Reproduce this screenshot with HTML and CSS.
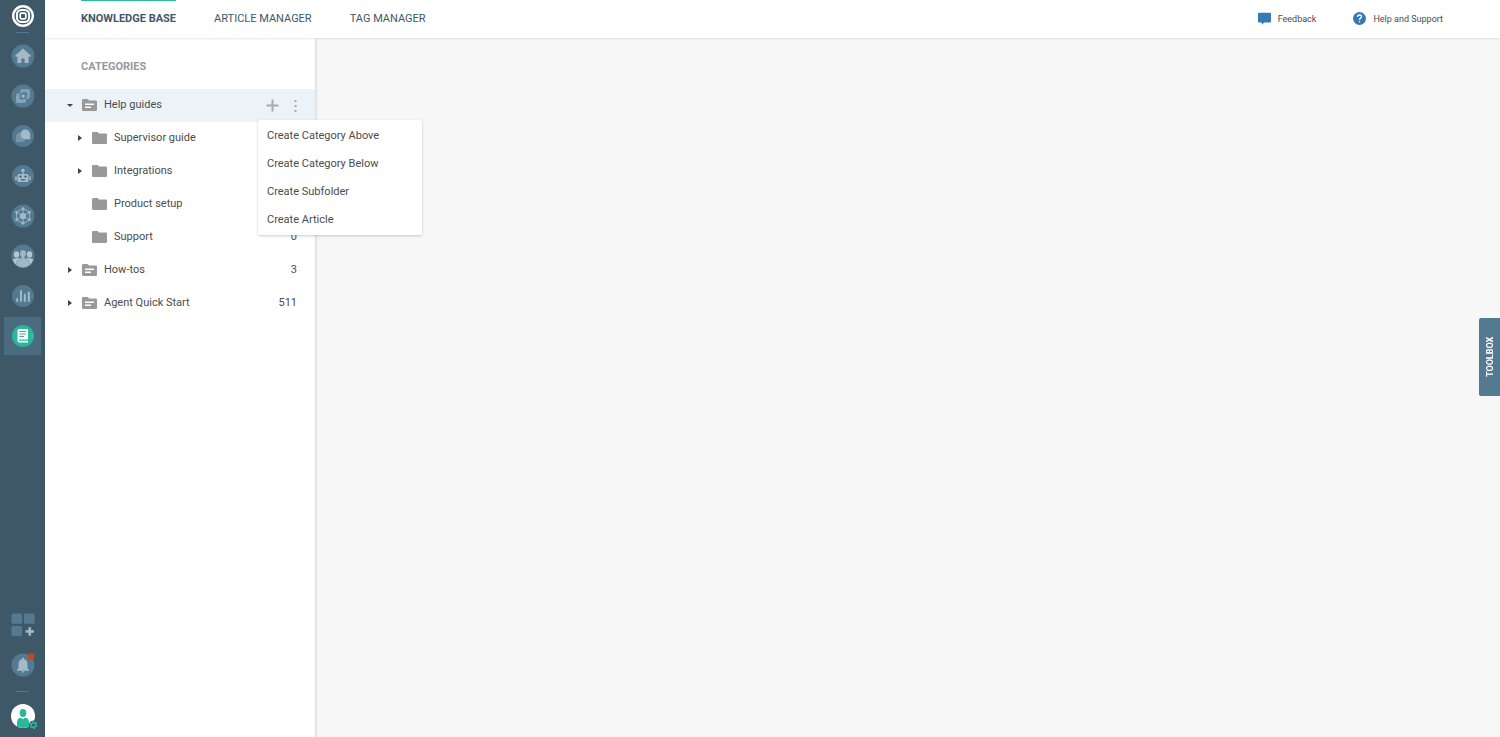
FILE: index.html
```html
<!DOCTYPE html>
<html lang="en">
<head>
    <meta charset="UTF-8">
    <meta name="viewport" content="width=device-width, initial-scale=1.0">
    <title>Knowledge Base</title>
    <link rel="stylesheet" href="styles.css">
</head>
<body>
    <!-- folder icons used in the category tree -->
    <svg class="symbols" aria-hidden="true">
        <symbol id="folder" viewBox="0 0 15 12">
            <path fill="#999" d="M1.2 0H5.6L7 1.4H13.8Q15 1.4 15 2.6V10.8Q15 12 13.8 12H1.2Q0 12 0 10.8V1.2Q0 0 1.2 0Z"/>
        </symbol>
        <symbol id="folder-text" viewBox="0 0 15 12">
            <path fill="#999" d="M1.2 0H5.6L7 1.4H13.8Q15 1.4 15 2.6V10.8Q15 12 13.8 12H1.2Q0 12 0 10.8V1.2Q0 0 1.2 0Z"/>
            <path fill="#fff" d="M3 4.5H12V6H3ZM3 7.5H9V9H3Z"/>
        </symbol>
    </svg>

    <aside class="sidebar">
        <a class="logo" href="#" aria-label="Home page">
            <svg width="22" height="22" viewBox="0 0 22 22" fill="none">
                <circle cx="11" cy="11" r="9.8" stroke="#fff" stroke-width="2.4"/>
                <rect x="4.9" y="4.9" width="12.2" height="12.2" rx="4.6" stroke="#fff" stroke-width="2"/>
                <rect x="8.2" y="8.2" width="5.6" height="5.6" rx="1.2" stroke="#fff" stroke-width="1.8"/>
            </svg>
        </a>
        <hr>
        <nav class="side-nav">
            <a href="#" aria-label="Dashboard">
                <svg width="24" height="24" viewBox="0 0 24 24">
                    <circle cx="12" cy="12" r="11.5" fill="#547a92"/>
                    <path fill="#a3bac8" d="M12 4.5L20 11.8L19 12.8H17.6V19H13.6V14.4H10.4V19H6.4V12.8H5L4 11.8Z"/>
                </svg>
            </a>
            <a href="#" aria-label="Tickets">
                <svg width="24" height="24" viewBox="0 0 24 24">
                    <circle cx="12" cy="12" r="11.5" fill="#547a92"/>
                    <path fill="#7f9fb3" d="M11 5H17.5Q19 5 19 6.5V12.5Q19 15 16.5 15H15.2V12H15.8V8.2H12V9H9V7Q9 5 11 5Z"/>
                    <path fill="#86a4b7" d="M8 9.2H8.8V15.6H12.4V15H15V17Q15 19 13 19H6.5Q5 19 5 17.5V12Q5 9.2 8 9.2Z"/>
                    <rect x="10.6" y="10.6" width="3" height="3" fill="#a3bac8"/>
                </svg>
            </a>
            <a href="#" aria-label="Chats">
                <svg width="24" height="24" viewBox="0 0 24 24">
                    <circle cx="12" cy="12" r="11" fill="#547a92"/>
                    <path fill="#7594a8" d="M9.4 8Q5 9 5 13.2V18H10Q13.2 18 14.6 15.8Q8.6 14.8 9.4 8Z"/>
                    <path fill="#a3bac8" d="M14.3 5.6A4.9 4.9 0 0 1 19.2 10.5V15.3H14.3A4.85 4.85 0 0 1 14.3 5.6Z"/>
                </svg>
            </a>
            <a href="#" aria-label="Bots">
                <svg width="24" height="24" viewBox="0 0 24 24">
                    <circle cx="12" cy="12" r="11" fill="#547a92"/>
                    <circle cx="12" cy="6.5" r="1.8" fill="#a3bac8"/>
                    <path fill="#a3bac8" d="M11.4 7H12.6V10H16Q17.5 10 17.5 11.5V16.5Q17.5 18 16 18H8Q6.5 18 6.5 16.5V11.5Q6.5 10 8 10H11.4ZM4.2 12.5H5.8V16H4.2ZM18.2 12.5H19.8V16H18.2Z"/>
                    <circle cx="9.5" cy="12.6" r="1.1" fill="#3e5868"/>
                    <circle cx="14.5" cy="12.6" r="1.1" fill="#3e5868"/>
                    <path d="M9.5 15.2H14.5L13.5 16.4H10.5Z" fill="#3e5868"/>
                </svg>
            </a>
            <a href="#" aria-label="Network">
                <svg width="24" height="24" viewBox="0 0 24 24">
                    <circle cx="12" cy="12" r="11.5" fill="#547a92"/>
                    <path fill="none" stroke="#a3bac8" stroke-width=".9" d="M12 4.5L18.5 8.2V15.8L12 19.5L5.5 15.8V8.2ZM12 4.5V19.5M5.5 8.2L18.5 15.8M18.5 8.2L5.5 15.8"/>
                    <g fill="#a3bac8">
                        <circle cx="12" cy="12" r="3.1"/>
                        <circle cx="12" cy="4.7" r="1.4"/>
                        <circle cx="18.4" cy="8.3" r="1.4"/>
                        <circle cx="18.4" cy="15.7" r="1.4"/>
                        <circle cx="12" cy="19.3" r="1.4"/>
                        <circle cx="5.6" cy="15.7" r="1.4"/>
                        <circle cx="5.6" cy="8.3" r="1.4"/>
                    </g>
                </svg>
            </a>
            <a href="#" aria-label="Contacts">
                <svg width="24" height="24" viewBox="0 0 24 24">
                    <circle cx="12" cy="12" r="11.5" fill="#547a92"/>
                    <path fill="#b3c6d1" d="M1.6 15.5Q4.5 13.8 7.5 14.3H16.5Q19.5 13.8 22.4 15.5Q19.6 23.4 12 23.5Q4.4 23.4 1.6 15.5Z"/>
                    <ellipse cx="5.5" cy="10.5" rx="2.6" ry="3.2" fill="#b3c6d1"/>
                    <ellipse cx="18.5" cy="10.5" rx="2.6" ry="3.2" fill="#b3c6d1"/>
                    <path fill="#a0b8c5" stroke="#7192a6" stroke-width=".6" d="M5 20.8Q5.6 15.2 10.5 14.4V13Q8.9 11.8 8.9 9.4Q9 6 12 6Q15 6 15.1 9.4Q15.1 11.8 13.5 13V14.4Q18.4 15.2 19 20.8Q12 26 5 20.8Z"/>
                </svg>
            </a>
            <a href="#" aria-label="Reports">
                <svg width="24" height="24" viewBox="0 0 24 24">
                    <circle cx="12" cy="12" r="11" fill="#547a92"/>
                    <path stroke="#a3bac8" stroke-width="2" stroke-linecap="round" d="M6.2 15V17M10 7V17M13.8 10.5V17M17.8 8.5V17"/>
                </svg>
            </a>
            <a class="active" href="#" aria-label="Knowledge base" aria-current="page">
                <svg width="24" height="24" viewBox="0 0 24 24">
                    <circle cx="12" cy="12" r="11" fill="#29b899"/>
                    <path fill="#fff" d="M8 5H17V15.6H8.6Q7.8 15.6 7.8 16.2Q7.8 16.8 8.6 16.8H17V18.6H8.4Q6.5 18.6 6.5 16.8V6.6Q6.5 5 8 5Z"/>
                    <path stroke="#29b899" d="M8.5 7.5H15M8.5 10H15M8.5 12.5H13"/>
                </svg>
            </a>
        </nav>
        <div class="side-bottom">
            <a href="#" aria-label="Add app">
                <svg width="24" height="24" viewBox="0 0 24 24">
                    <g fill="#547a92">
                        <rect x=".5" y=".5" width="10.6" height="10.2" rx="1.5"/>
                        <rect x="13" y=".5" width="10.6" height="10.2" rx="1.5"/>
                        <rect x=".5" y="13" width="10.6" height="10.2" rx="1.5"/>
                    </g>
                    <path stroke="#a3bac8" stroke-width="2.6" d="M18.8 14.3V22.7M14.6 18.5H23"/>
                </svg>
            </a>
            <a href="#" aria-label="Notifications">
                <svg width="24" height="24" viewBox="0 0 24 24">
                    <circle cx="12" cy="12" r="11.5" fill="#547a92"/>
                    <path fill="#a3bac8" d="M12 4.5Q12.9 4.5 13 5.9Q16.5 6.8 16.5 11V15L18 17V17.8H6V17L7.5 15V11Q7.5 6.8 11 5.9Q11.1 4.5 12 4.5ZM10.5 18.2H13.5Q13.3 19.6 12 19.6Q10.7 19.6 10.5 18.2Z"/>
                    <circle cx="20.2" cy="3.5" r="3.2" fill="#c9461c"/>
                </svg>
            </a>
            <hr>
            <a class="profile" href="#" aria-label="Profile">
                <svg width="28" height="26" viewBox="0 0 28 26">
                    <circle cx="12" cy="12" r="12" fill="#fff"/>
                    <ellipse cx="12" cy="9" rx="3.3" ry="4" fill="#29b899"/>
                    <path fill="#29b899" d="M6 22.6V18.5Q6 13.7 10 13.7L12 15.2L14 13.7Q18 13.7 18 18.5V22.6Q12 25.2 6 22.6Z"/>
                    <circle cx="22.5" cy="21" r="4.6" fill="#3e5868"/>
                    <circle cx="22.5" cy="21" r="2.3" fill="none" stroke="#29b899" stroke-width="1.6"/>
                    <circle cx="22.5" cy="21" r="3.5" fill="none" stroke="#29b899" stroke-width="1.2" stroke-dasharray="1.83"/>
                </svg>
            </a>
        </div>
    </aside>

    <div class="main">
        <header>
            <nav class="tabs">
                <a class="active" href="#">KNOWLEDGE BASE</a>
                <a href="#">ARTICLE MANAGER</a>
                <a href="#">TAG MANAGER</a>
            </nav>
            <div class="links">
                <a href="#">
                    <svg width="13" height="13" viewBox="0 0 13 13"><path fill="#337ab7" d="M1 .8H12Q13 .8 13 1.8V9.4Q13 10.4 12 10.4H6.2L3.8 12.8V10.4H1Q0 10.4 0 9.4V1.8Q0 .8 1 .8Z"/></svg>
                    Feedback
                </a>
                <a href="#">
                    <svg width="13" height="13" viewBox="0 0 13 13" fill="none">
                        <circle cx="6.5" cy="6.5" r="6.5" fill="#337ab7"/>
                        <path stroke="#fff" stroke-width="1.3" d="M4.5 5Q4.5 3 6.5 3Q8.5 3 8.5 4.8Q8.5 5.7 7.3 6.4Q6.5 6.9 6.5 8M6.5 9V10.3"/>
                    </svg>
                    Help and Support
                </a>
            </div>
        </header>

        <div class="content">
            <section class="categories">
                <h2>CATEGORIES</h2>
                <ul class="tree">
                    <li>
                        <div class="row selected">
                            <button class="arrow open" aria-label="Collapse"></button>
                            <svg class="folder"><use href="#folder-text"/></svg>
                            <span class="name">Help guides</span>
                            <button class="action" aria-label="Add">
                                <svg width="13" height="13" viewBox="0 0 13 13"><path stroke="#aaa" stroke-width="2" d="M6.5 .5V12.5M.5 6.5H12.5"/></svg>
                            </button>
                            <button class="action more" aria-label="More">
                                <svg width="3" height="13" viewBox="0 0 3 13"><path fill="#aaa" d="M.5 1H2.5V3H.5ZM.5 6H2.5V8H.5ZM.5 11H2.5V13H.5Z"/></svg>
                            </button>
                            <div class="menu">
                                <button>Create Category Above</button>
                                <button>Create Category Below</button>
                                <button>Create Subfolder</button>
                                <button>Create Article</button>
                            </div>
                        </div>
                        <ul>
                            <li class="row">
                                <button class="arrow" aria-label="Expand"></button>
                                <svg class="folder"><use href="#folder"/></svg>
                                <span class="name">Supervisor guide</span>
                            </li>
                            <li class="row">
                                <button class="arrow" aria-label="Expand"></button>
                                <svg class="folder"><use href="#folder"/></svg>
                                <span class="name">Integrations</span>
                            </li>
                            <li class="row">
                                <span class="arrow none"></span>
                                <svg class="folder"><use href="#folder"/></svg>
                                <span class="name">Product setup</span>
                            </li>
                            <li class="row">
                                <span class="arrow none"></span>
                                <svg class="folder"><use href="#folder"/></svg>
                                <span class="name">Support</span>
                                <span class="count">0</span>
                            </li>
                        </ul>
                    </li>
                    <li class="row">
                        <button class="arrow" aria-label="Expand"></button>
                        <svg class="folder"><use href="#folder-text"/></svg>
                        <span class="name">How-tos</span>
                        <span class="count">3</span>
                    </li>
                    <li class="row">
                        <button class="arrow" aria-label="Expand"></button>
                        <svg class="folder"><use href="#folder-text"/></svg>
                        <span class="name">Agent Quick Start</span>
                        <span class="count">511</span>
                    </li>
                </ul>
            </section>
            <main></main>
        </div>
    </div>

    <button class="toolbox">TOOLBOX</button>
</body>
</html>
```
FILE: styles.css
```css
* {
    box-sizing: border-box;
}
body {
    display: flex;
    min-height: 100vh;
    margin: 0;
    font-family: Roboto, sans-serif;
    font-size: 11px;
    color: #4c4c4c;
    background: #f7f7f7;
}
a {
    color: inherit;
    text-decoration: none;
}
button {
    padding: 0;
    border: 0;
    background: none;
    font: inherit;
    color: inherit;
    cursor: pointer;
}
svg {
    display: block;
    flex: none;
}
ul {
    margin: 0;
    padding: 0;
    list-style: none;
}
.symbols {
    display: none;
}

/* left icon bar */
.sidebar {
    display: flex;
    flex-direction: column;
    align-items: center;
    flex: none;
    width: 45px;
    padding: 5px 0 1px;
    background: #3e5868;
}
.sidebar hr {
    width: 13px;
    height: 1px;
    margin: 5px 0 4px;
    border: 0;
    background: #547a92;
}
.side-nav,
.side-bottom {
    display: flex;
    flex-direction: column;
    align-items: center;
    gap: 2px;
}
.side-nav a,
.side-bottom a {
    display: flex;
    align-items: center;
    justify-content: center;
    width: 37px;
    height: 38px;
}
.side-nav a.active {
    background: #4a6b80;
}
.side-bottom {
    margin-top: auto;
}
.side-bottom a.profile {
    justify-content: flex-end;
    width: 32px;
}

/* top bar */
.main {
    display: flex;
    flex-direction: column;
    flex: 1;
    min-width: 0;
}
header {
    position: relative;
    display: flex;
    justify-content: space-between;
    height: 38px;
    padding: 0 57px 0 36px;
    background: #fff;
    box-shadow: 0 1px 2px rgba(0, 0, 0, 0.1);
}
.tabs {
    display: flex;
    gap: 38px;
}
.tabs a {
    border-top: 1px solid transparent;
    line-height: 36px;
    color: #3e5868;
}
.tabs a.active {
    border-top-color: #29b899;
    font-weight: bold;
}
.links {
    display: flex;
    gap: 37px;
    padding-bottom: 1px;
    font-size: 9px;
}
.links a {
    display: flex;
    align-items: center;
    gap: 7px;
}

/* category tree */
.content {
    display: flex;
    flex: 1;
}
.categories {
    width: 270px;
    background: #fff;
    box-shadow: 1px 0 3px rgba(0, 0, 0, 0.15);
}
.categories h2 {
    margin: 0;
    padding: 21px 36px 14px;
    font-size: 11px;
    line-height: 16px;
    color: #999;
}
.row {
    position: relative;
    display: flex;
    align-items: center;
    height: 33px;
    padding: 0 18px 1px 20px;
}
.tree ul .row {
    padding-left: 30px;
}
.row.selected {
    background: #ebf3f9;
}
.arrow {
    display: flex;
    justify-content: center;
    width: 10px;
    margin-right: 7px;
}
.arrow::before {
    content: "";
    border: 3px solid transparent;
    border-left: 4px solid #444;
    border-right: 0;
}
.arrow.open::before {
    border: 3px solid transparent;
    border-top: 3px solid #444;
    border-bottom: 0;
}
.arrow.none::before {
    display: none;
}
.folder {
    width: 15px;
    height: 12px;
}
.name {
    flex: 1;
    margin-left: 7px;
}
.name,
.count {
    padding-bottom: 1px;
}
.action.more {
    width: 9px;
    margin: 0 -3px 0 12px;
}
.action.more svg {
    margin: auto;
}
.menu {
    position: absolute;
    top: 31px;
    left: 213px;
    z-index: 1;
    width: 164px;
    padding: 2px 0 1px;
    background: #fff;
    border-radius: 2px;
    box-shadow: 0 1px 3px rgba(0, 0, 0, 0.2);
}
.menu button {
    display: block;
    width: 100%;
    padding: 0 9px;
    line-height: 28px;
    text-align: left;
}

.toolbox {
    position: fixed;
    top: 318px;
    right: 0;
    width: 21px;
    height: 78px;
    padding-right: 2px;
    border-radius: 0 2px 2px 0;
    background: #547a92;
    color: #fff;
    font-size: 9px;
    font-weight: bold;
    line-height: 18px;
    writing-mode: vertical-rl;
    transform: rotate(180deg);
}
```
